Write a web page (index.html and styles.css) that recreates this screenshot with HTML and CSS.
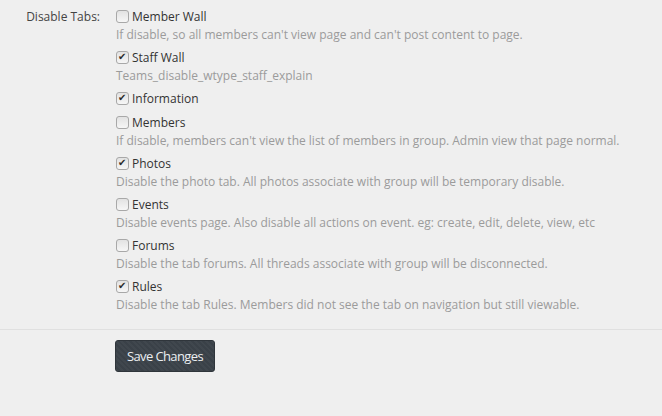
FILE: index.html
```html
<!DOCTYPE html>
<html lang="en">
<head>
    <meta charset="UTF-8">
    <title>Group Settings</title>
    <link rel="stylesheet" href="styles.css">
</head>
<body>

    <form class="settings-form">
        <div class="form-row">
            <label class="row-label">Disable Tabs:</label>
            <div class="row-controls">
                <div class="option">
                    <label class="check"><input type="checkbox"> Member Wall</label>
                    <p class="explain">If disable, so all members can't view page and can't post content to page.</p>
                </div>
                <div class="option">
                    <label class="check"><input type="checkbox" checked> Staff Wall</label>
                    <p class="explain">Teams_disable_wtype_staff_explain</p>
                </div>
                <div class="option">
                    <label class="check"><input type="checkbox" checked> Information</label>
                </div>
                <div class="option">
                    <label class="check"><input type="checkbox"> Members</label>
                    <p class="explain">If disable, members can't view the list of members in group. Admin view that page normal.</p>
                </div>
                <div class="option">
                    <label class="check"><input type="checkbox" checked> Photos</label>
                    <p class="explain">Disable the photo tab. All photos associate with group will be temporary disable.</p>
                </div>
                <div class="option">
                    <label class="check"><input type="checkbox"> Events</label>
                    <p class="explain">Disable events page. Also disable all actions on event. eg: create, edit, delete, view, etc</p>
                </div>
                <div class="option">
                    <label class="check"><input type="checkbox"> Forums</label>
                    <p class="explain">Disable the tab forums. All threads associate with group will be disconnected.</p>
                </div>
                <div class="option">
                    <label class="check"><input type="checkbox" checked> Rules</label>
                    <p class="explain">Disable the tab Rules. Members did not see the tab on navigation but still viewable.</p>
                </div>
            </div>
        </div>

        <div class="form-actions">
            <button type="submit" class="btn-save">Save Changes</button>
        </div>
    </form>

</body>
</html>
```

FILE: styles.css
```css
* {
    margin: 0;
    padding: 0;
    box-sizing: border-box;
}

body {
    font-family: "Open Sans", Arial, sans-serif;
    font-size: 12px;
    line-height: 18px;
    background-color: #efefef;
    color: #333;
}

.form-row {
    display: grid;
    grid-template-columns: 100px 1fr;
    column-gap: 16px;
    padding: 8px 0 16px;
    border-bottom: 1px solid #e0e0e0;
}

.row-label {
    text-align: right;
    color: #444;
}

.option {
    margin-bottom: 6px;
}

.option:last-child {
    margin-bottom: 0;
}

.check {
    display: flex;
    align-items: center;
    gap: 3px;
    color: #333;
    white-space: nowrap;
}

.check input {
    appearance: none;
    -webkit-appearance: none;
    width: 13px;
    height: 13px;
    border: 1px solid #a8a8a8;
    border-radius: 3px;
    background: linear-gradient(#e2e2e2, #f6f6f6);
    position: relative;
    flex: none;
    margin-top: -1px;
}

.check input:checked::after {
    content: "\2714";
    position: absolute;
    left: 1px;
    top: -2px;
    font-family: "DejaVu Sans", sans-serif;
    font-size: 10px;
    line-height: 14px;
    color: #2b2b2b;
}

.explain {
    color: #9b9b9b;
    line-height: 17px;
    white-space: nowrap;
}

.form-actions {
    padding: 10px 0 0 115px;
}

.btn-save {
    width: 100px;
    height: 32px;
    border: 1px solid #2f353b;
    border-radius: 3px;
    background-color: #3a4148;
    background-image: repeating-linear-gradient(45deg, rgba(255,255,255,0.03) 0 2px, transparent 2px 4px);
    color: #eceff2;
    font-family: "Open Sans", Arial, sans-serif;
    font-size: 13px;
    letter-spacing: -0.6px;
    cursor: pointer;
}
```
